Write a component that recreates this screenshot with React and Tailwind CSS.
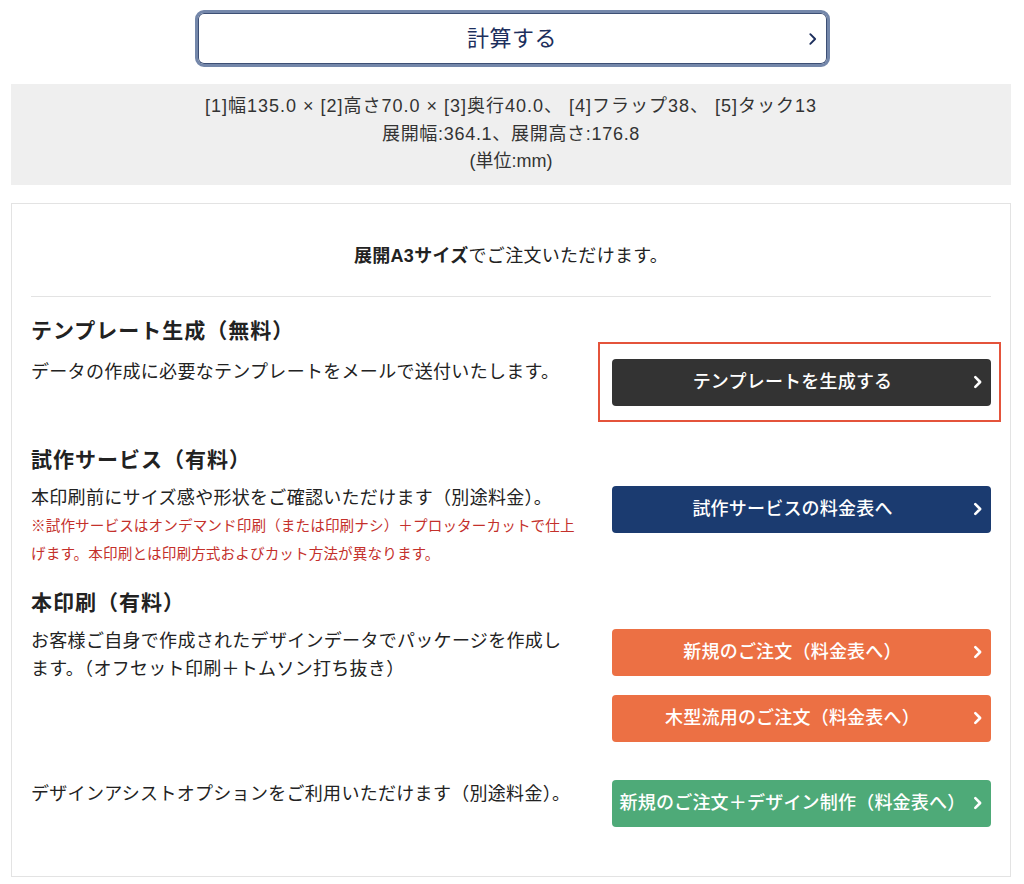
import React from 'react';

const FONT = { fontFamily: '"Liberation Sans", "Noto Sans CJK JP", sans-serif' };

const Chevron = ({ className = '', strokeWidth = 3 }) => (
  <svg viewBox="0 0 10 16" className={className} fill="none" stroke="currentColor" strokeWidth={strokeWidth} strokeLinecap="round" strokeLinejoin="round">
    <path d="M2.5 2.5 8 8l-5.5 5.5" />
  </svg>
);

// Solid action button used in the right column
const ActionButton = ({ label, color }) => (
  <button
    type="button"
    className={`relative flex h-[47px] w-full items-center justify-center rounded-[4px] pr-[18px] text-[18px] font-medium tracking-[0.2px] text-white ${color}`}
  >
    <span>{label}</span>
    <Chevron className="absolute right-[9px] top-1/2 h-[14px] w-[9px] -translate-y-1/2" />
  </button>
);

export default function App() {
  return (
    <div className="min-h-screen bg-white pb-[8px] text-[#222]" style={FONT}>
      {/* calculate button */}
      <div className="flex justify-center pt-[10px]">
        <button
          type="button"
          className="relative flex h-[57px] w-[635px] items-center justify-center rounded-[9px] border-[3px] border-[#7487aa] bg-white text-[22px] tracking-[0.5px] text-[#1d2f5d] shadow-[inset_0_0_0_1px_#3d4f75]"
        >
          計算する
          <Chevron className="absolute right-[10px] top-1/2 h-[14px] w-[9px] -translate-y-1/2" strokeWidth={2.2} />
        </button>
      </div>

      {/* result summary */}
      <div className="ml-[11px] mt-[17px] w-[1000px] bg-[#efefef] py-[9px] text-center text-[18px] leading-[27.5px] text-[#333]">
        <p className="tracking-[1px]">[1]幅135.0 × [2]高さ70.0 × [3]奥行40.0、 [4]フラップ38、 [5]タック13</p>
        <p className="tracking-[0.7px]">展開幅:364.1、展開高さ:176.8</p>
        <p>(単位:mm)</p>
      </div>

      {/* order card */}
      <div className="ml-[11px] mt-[18px] w-[1000px] border border-[#e3e3e3] px-[19px] pb-[49px] pt-[38px]">
        <p className="text-center text-[18px] leading-[28px] tracking-[0.3px]">
          <span className="font-bold">展開A3サイズ</span>でご注文いただけます。
        </p>
        <div className="mt-[26px] h-px bg-[#e3e3e3]" />

        {/* template */}
        <h3 className="mt-[19px] text-[21px] font-bold leading-[30px] tracking-[1px]">テンプレート生成（無料）</h3>
        <div className="mt-[12px] grid grid-cols-[546px_379px] items-start justify-between">
          <p className="text-[18px] leading-[28px] tracking-[0.3px]">データの作成に必要なテンプレートをメールで送付いたします。</p>
          <div className="relative mt-[1px]">
            <div className="pointer-events-none absolute bottom-[-16px] left-[-14px] right-[-10px] top-[-17px] border-2 border-[#e4533b]" />
            <ActionButton label="テンプレートを生成する" color="bg-[#333333]" />
          </div>
        </div>

        {/* sample service */}
        <h3 className="mt-[39px] text-[21px] font-bold leading-[30px] tracking-[1px]">試作サービス（有料）</h3>
        <div className="mt-[9px] grid grid-cols-[546px_379px] items-start justify-between">
          <div>
            <p className="text-[18px] leading-[28px] tracking-[0.3px]">本印刷前にサイズ感や形状をご確認いただけます（別途料金）。</p>
            <p className="text-[14.6px] leading-[28px] tracking-[0.1px] text-[#c4302b]">
              ※試作サービスはオンデマンド印刷（または印刷ナシ）＋プロッターカットで仕上げます。本印刷とは印刷方式およびカット方法が異なります。
            </p>
          </div>
          <div className="mt-[2px]">
            <ActionButton label="試作サービスの料金表へ" color="bg-[#1b3b70]" />
          </div>
        </div>

        {/* production print */}
        <h3 className="mt-[20px] text-[21px] font-bold leading-[30px] tracking-[1px]">本印刷（有料）</h3>
        <div className="mt-[9px] grid grid-cols-[546px_379px] items-start justify-between">
          <p className="text-[18px] leading-[28px] tracking-[0.3px]">
            お客様ご自身で作成されたデザインデータでパッケージを作成します。（オフセット印刷＋トムソン打ち抜き）
          </p>
          <div className="mt-[2px] flex flex-col gap-[19px]">
            <ActionButton label="新規のご注文（料金表へ）" color="bg-[#ec7044]" />
            <ActionButton label="木型流用のご注文（料金表へ）" color="bg-[#ec7044]" />
          </div>
        </div>

        {/* design assist */}
        <div className="mt-[38px] grid grid-cols-[546px_379px] items-start justify-between">
          <p className="text-[18px] leading-[28px] tracking-[0.3px]">デザインアシストオプションをご利用いただけます（別途料金）。</p>
          <ActionButton label="新規のご注文＋デザイン制作（料金表へ）" color="bg-[#4eaa78]" />
        </div>
      </div>
    </div>
  );
}
